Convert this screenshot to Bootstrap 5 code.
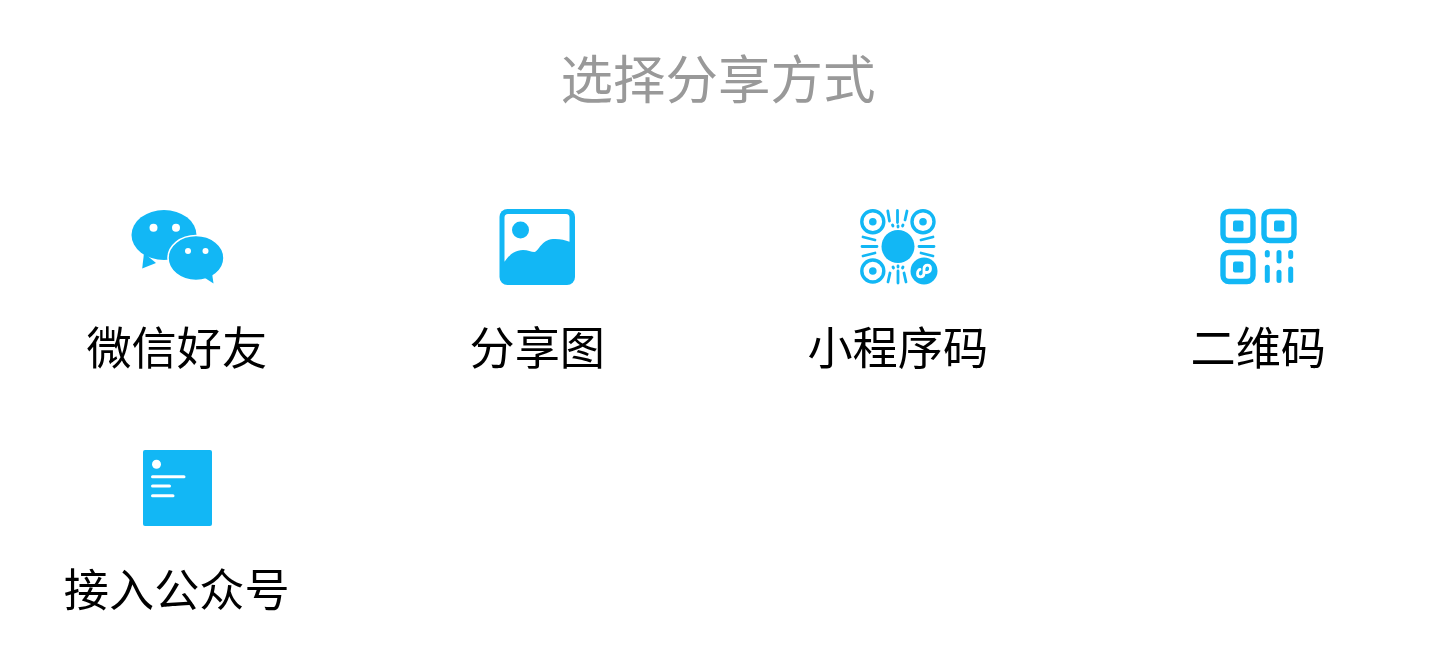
<!DOCTYPE html>
<html lang="zh-CN">
<head>
<meta charset="utf-8">
<title>选择分享方式</title>
<link href="https://cdn.jsdelivr.net/npm/bootstrap@5.3.0/dist/css/bootstrap.min.css" rel="stylesheet">
<style>
html,body{height:100%;}
body{background:#fff;overflow:hidden;font-family:"Noto Sans CJK SC","Noto Sans",sans-serif;}
.share-title{font-size:52.500px;line-height:64px;color:#999;font-weight:400;padding-top:44px;height:207px;margin:0;filter:blur(.4px);}
.share-grid{width:1442px;margin-left:-3.500px;margin-right:0;}
.share-cell{height:242px;}
.share-ico{width:100px;height:80px;display:block;filter:blur(.7px);fill:#12b7f5;}
.share-label{font-size:45.200px;line-height:56px;color:#000;margin-top:31px;font-weight:400;white-space:nowrap;filter:blur(.4px);}
.ln{stroke:#12b7f5;fill:none;stroke-linecap:round;}
.wl{stroke:#fff;fill:none;stroke-linecap:round;}
</style>
</head>
<body>
<h1 class="share-title text-center">选择分享方式</h1>
<div class="row g-0 share-grid">
  <div class="col-3 share-cell d-flex flex-column align-items-center">
    <svg class="share-ico" viewBox="0 0 100 80">
      <ellipse cx="37" cy="28" rx="32.500" ry="25"/>
      <path d="M17 46 15.200 61.500 29 56Z"/>
      <ellipse cx="69" cy="51" rx="28" ry="22.500" stroke="#fff" stroke-width="1.600"/>
      <path d="M78 71 86.500 76.500 85 66Z"/>
      <circle cx="26.500" cy="20.700" r="4" fill="#fff"/><circle cx="49" cy="20.700" r="4" fill="#fff"/>
      <circle cx="61" cy="44" r="3" fill="#fff"/><circle cx="78.500" cy="44" r="3" fill="#fff"/>
    </svg>
    <div class="share-label">微信好友</div>
  </div>
  <div class="col-3 share-cell d-flex flex-column align-items-center">
    <svg class="share-ico" viewBox="0 0 100 80">
      <rect x="12.500" y="2" width="75.500" height="76" rx="8"/>
      <path fill="#fff" d="M21 7H79Q82.500 7 82.500 10.500V34.700C78 33 72 31.500 66 32 54 33 52 44 47.500 45 44 45 41 43 36 43 28 43 22 48 17.500 54.700V10.500Q17.500 7 21 7Z"/>
      <circle cx="33.500" cy="23" r="8.500"/>
    </svg>
    <div class="share-label">分享图</div>
  </div>
  <div class="col-3 share-cell d-flex flex-column align-items-center">
    <svg class="share-ico" viewBox="0 0 100 80">
      <g fill="none" stroke="#12b7f5" stroke-width="3.400">
        <circle cx="24.800" cy="14.700" r="11"/><circle cx="75" cy="14.700" r="11"/><circle cx="24.800" cy="64" r="11"/>
      </g>
      <circle cx="24.800" cy="14.700" r="3.800"/><circle cx="75" cy="14.700" r="3.800"/><circle cx="24.800" cy="64" r="3.800"/>
      <circle cx="50" cy="39.500" r="16.500"/>
      <circle cx="76" cy="64" r="13.500"/>
      <path class="wl" stroke-width="2.800" d="M69.500 66.500C69.500 71 75.500 71 76 66.500V61.500C76.500 57 82.500 57 82.500 61.500S78.500 65.500 78 65.500M72 62.500C71.500 62.500 69.500 63.500 69.500 66.500"/>
      <g class="ln" stroke-width="2.800">
        <path d="M39.800 4 41.500 14M49.500 3.500V15.500M59 4 57 13M44.500 18 45 19M50 19V20M55 18 54.500 19"/>
        <path d="M15 30 27 33M14 39.500H29M15 49 27 46"/>
        <path d="M85 30 73 33M86 39.500H71M85 49 73 46"/>
        <path d="M40 75 42 66M50 76V64M58 75 56 66M45 60 45.500 61M50 59V60M55 60 54.500 61"/>
      </g>
    </svg>
    <div class="share-label">小程序码</div>
  </div>
  <div class="col-3 share-cell d-flex flex-column align-items-center">
    <svg class="share-ico" viewBox="0 0 100 80">
      <g fill="none" stroke="#12b7f5" stroke-width="5.400">
        <rect x="15" y="4.500" width="30" height="29" rx="6"/>
        <rect x="56" y="4.500" width="30" height="29" rx="6"/>
        <rect x="15" y="45.500" width="30" height="29" rx="6"/>
      </g>
      <rect x="25" y="13.500" width="10.500" height="11" rx="2"/>
      <rect x="66" y="13.500" width="10.500" height="11" rx="2"/>
      <rect x="25" y="54.500" width="10.500" height="11" rx="2"/>
      <g class="ln" stroke-width="5">
        <path d="M59.300 45.500V48M59.300 60.300V73.500M71 45.500V54M71 65.300V73.500M82.700 45.500V49.500M82.700 62V73.500"/>
      </g>
    </svg>
    <div class="share-label">二维码</div>
  </div>
  <div class="col-3 share-cell d-flex flex-column align-items-center">
    <svg class="share-ico" viewBox="0 0 100 80">
      <rect x="16" y="1" width="69" height="76" rx="2"/>
      <circle cx="29.500" cy="15.300" r="4.500" fill="#fff"/>
      <g class="wl" stroke-width="3">
        <path d="M25.500 27.700H57M25.500 37H42.500M25.500 46.700H46"/>
      </g>
    </svg>
    <div class="share-label">接入公众号</div>
  </div>
</div>
<script src="https://cdn.jsdelivr.net/npm/bootstrap@5.3.0/dist/js/bootstrap.bundle.min.js"></script>
</body>
</html>
